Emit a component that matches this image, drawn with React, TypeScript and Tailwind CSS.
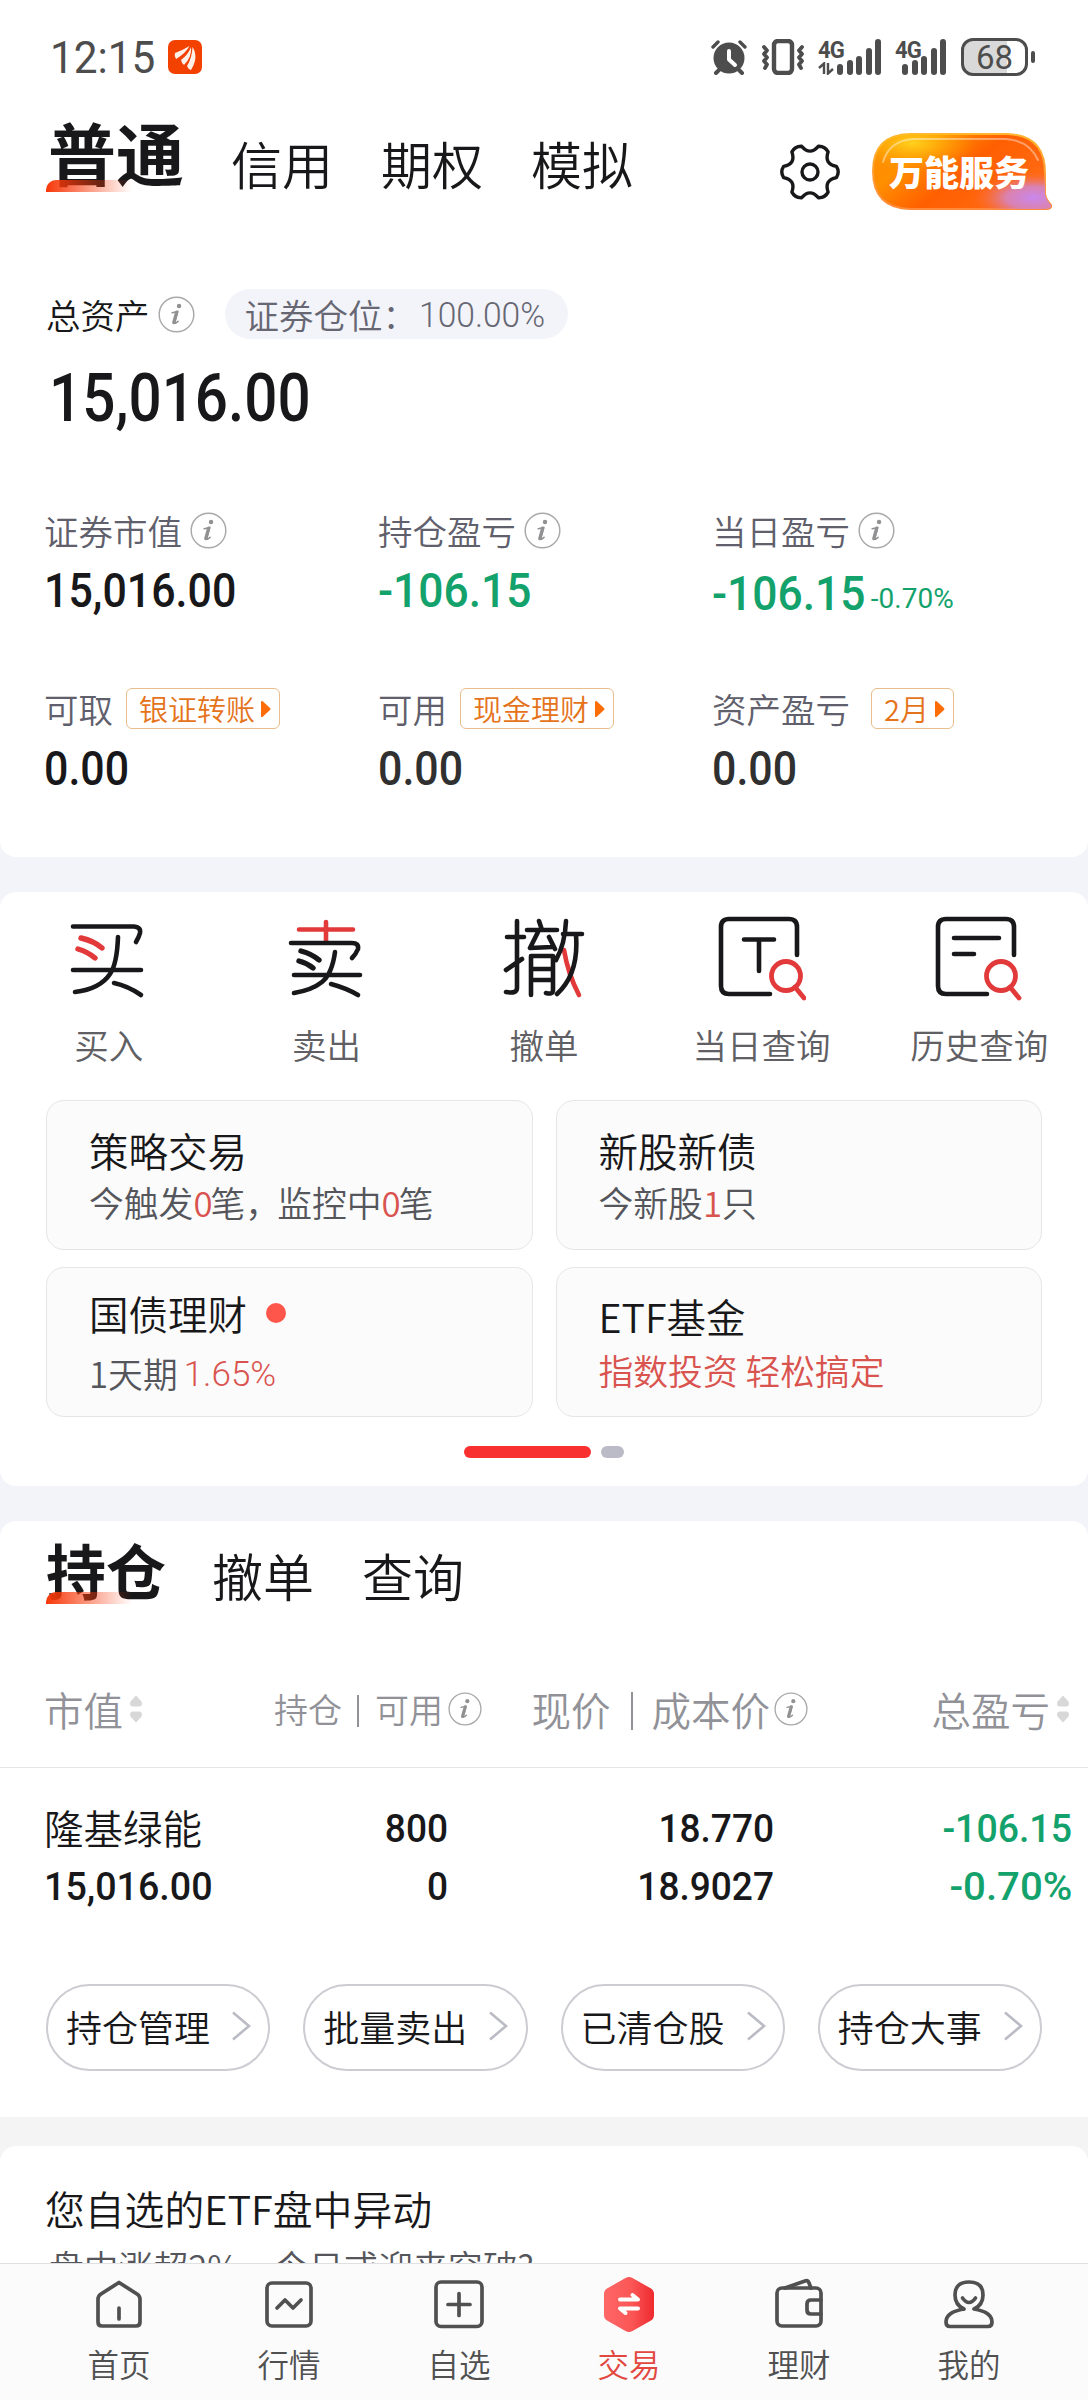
import React from "react";

const CJK = "font-['Noto_Sans_CJK_SC',sans-serif]";
const NUM = "font-['Roboto','Noto_Sans_CJK_SC',sans-serif]";

function Info({ size = 37, className = "" }: { size?: number; className?: string }) {
  return (
    <svg width={size} height={size} viewBox="0 0 38 38" className={`shrink-0 ${className}`}>
      <circle cx="19" cy="19" r="17.8" fill="none" stroke="#a9a9ab" strokeWidth="1.5" />
      <circle cx="21.6" cy="10.2" r="2.3" fill="#919193" />
      <path d="M14.6 17.2 L20.4 15.8 L17.2 27.2 Q17 28.6 18.6 27.6 L20.6 26" fill="none" stroke="#919193" strokeWidth="1.6" strokeLinecap="round" strokeLinejoin="round" />
      <path d="M19.2 16.6 L16.2 27.4" stroke="#919193" strokeWidth="3.4" strokeLinecap="round" />
    </svg>
  );
}

function Sorter() {
  return (
    <svg width="14" height="28" viewBox="0 0 14 28" className="shrink-0">
      <path d="M7 .5 L12.500 6.500 Q14 11 10.500 11.500 H3.500 Q0 11 1.500 6.500 Z" fill="#d8d8d8" />
      <path d="M7 27.500 L12.500 21.500 Q14 17 10.500 16.500 H3.500 Q0 17 1.500 21.500 Z" fill="#d8d8d8" />
    </svg>
  );
}

function StatusBar() {
  return (
    <div className="flex h-[112px] items-center pl-[50px] pr-[53px] pt-[2px] text-[#4d4d4d]">
      <span className={`${NUM} w-[118px] text-[45px] leading-none`}>
        <span className="inline-block origin-left scale-x-[0.94]">12:15</span>
      </span>
      <svg width="34" height="34" viewBox="0 0 34 34">
        <rect width="34" height="34" rx="7" fill="#f34100" />
        <path d="M7 13 Q15 10 21.5 6 Q18 13 8 19 Q6 16 7 13Z M13 20 Q20 15 23 7 Q24 17 16 25 Q13.5 23 13 20Z M19 26 Q24 18 24.5 7 Q31 17 23 30 Q20 29 19 26Z" fill="#fff0e8" />
      </svg>
      <div className="ml-auto flex items-center">
        <svg width="36" height="36" viewBox="0 0 36 36">
          <circle cx="18" cy="19" r="15.5" fill="#4d4d4d" />
          <path d="M2 8 L7 3 M34 8 L29 3" stroke="#4d4d4d" strokeWidth="3.4" strokeLinecap="round" />
          <path d="M8 31 L5 34 M28 31 L31 34" stroke="#4d4d4d" strokeWidth="4" strokeLinecap="round" />
          <path d="M18 12 V20.5 L24 26" fill="none" stroke="#fff" strokeWidth="4" strokeLinecap="round" strokeLinejoin="round" />
        </svg>
        <svg width="44" height="36" viewBox="0 0 44 36" className="ml-[14px]">
          <rect x="13" y="2" width="18" height="32" rx="4" fill="none" stroke="#4d4d4d" strokeWidth="4.400" />
          <path d="M3 8 L6 11.500 L3 15 L6 18.500 L3 22 L6 25.500 L4 29 M41 8 L38 11.500 L41 15 L38 18.500 L41 22 L38 25.500 L40 29" fill="none" stroke="#4d4d4d" strokeWidth="3.800" strokeLinejoin="round" strokeLinecap="round" />
        </svg>
        <Signal arrows />
        <Signal />
        <div className="ml-[15px] flex h-[38px] w-[67px] items-center justify-center overflow-hidden rounded-[12px] border-[3px] border-[#4d4d4d] bg-[linear-gradient(90deg,#d9d9d9_70%,#fff_70%)]">
          <span className={`${NUM} text-[33px] leading-none`}>68</span>
        </div>
        <div className="ml-[3px] h-[12px] w-[4px] rounded-full bg-[#4d4d4d]" />
      </div>
    </div>
  );
}

const signalBars = [11, 15, 19, 27, 36];

function Signal({ arrows = false }: { arrows?: boolean }) {
  return (
    <div className={arrows ? "relative ml-[13px] h-[36px] w-[63px]" : "relative ml-[14px] h-[36px] w-[51px]"}>
      <span className={`${NUM} absolute left-0 top-[-1px] inline-block origin-left scale-x-[0.92] text-[24px] font-bold leading-none tracking-[-1px]`}>4G</span>
      {arrows && (
        <svg width="16" height="13" viewBox="0 0 16 13" className="absolute bottom-0 left-0">
          <path d="M1 6 L6 1.500 V12 M10 1 V11.500 L15 7" fill="none" stroke="#4d4d4d" strokeWidth="2.400" />
        </svg>
      )}
      <div className="absolute bottom-0 right-0 flex items-end gap-[3.500px]">
        {signalBars.map((h) => (
          <i key={h} className="w-[6px] rounded-full bg-[#4d4d4d]" style={{ height: h }} />
        ))}
      </div>
    </div>
  );
}

function Gear() {
  const p = (deg: number, r: number) =>
    `${(30 + r * Math.cos((deg * Math.PI) / 180)).toFixed(1)} ${(30 + r * Math.sin((deg * Math.PI) / 180)).toFixed(1)}`;
  let d = `M${p(-12, 27)}`;
  for (let k = 0; k < 6; k++) {
    const a = k * 60;
    d += ` Q${p(a, 30)} ${p(a + 12, 27)} Q${p(a + 30, 16)} ${p(a + 48, 27)}`;
  }
  return (
    <svg width="60" height="60" viewBox="0 0 60 60" className="shrink-0">
      <path d={`${d} Z`} fill="none" stroke="#18181a" strokeWidth="3.400" strokeLinejoin="round" />
      <circle cx="30" cy="30" r="8" fill="none" stroke="#18181a" strokeWidth="3.400" />
    </svg>
  );
}

function ServiceBadge() {
  return (
    <div className="relative flex h-[78px] w-[182px] shrink-0 items-center">
      <svg width="182" height="78" viewBox="0 0 182 78" className="absolute inset-0">
        <defs>
          <linearGradient id="bubble" x1="0" y1="0" x2="1" y2="0.5">
            <stop offset="0" stopColor="#ff8a00" />
            <stop offset="0.3" stopColor="#ff9000" />
            <stop offset="0.6" stopColor="#ff5f00" />
            <stop offset="1" stopColor="#ff6a14" />
          </linearGradient>
          <radialGradient id="sun" cx="0.22" cy="0.12" r="0.36">
            <stop offset="0" stopColor="#ffd21e" />
            <stop offset="1" stopColor="#ffa800" stopOpacity="0" />
          </radialGradient>
          <radialGradient id="violet" cx="0.9" cy="0.85" r="0.34">
            <stop offset="0" stopColor="#c988ee" />
            <stop offset="0.45" stopColor="#d684c0" stopOpacity="0.9" />
            <stop offset="1" stopColor="#ff6a3c" stopOpacity="0" />
          </radialGradient>
          <linearGradient id="rim" x1="0" y1="0" x2="0" y2="1">
            <stop offset="0" stopColor="#ffb52e" />
            <stop offset="1" stopColor="#ff8a3a" />
          </linearGradient>
        </defs>
        {["url(#bubble)", "url(#sun)", "url(#violet)"].map((f) => (
          <path key={f} d="M39 2 H136 Q174 3 174 41 V62 Q175 68 180 73 Q181 77 175 77 H39 Q2 76 2 39 Q2 3 39 2Z" fill={f} stroke={f === "url(#bubble)" ? "url(#rim)" : "none"} strokeWidth="2" />
        ))}
        <path d="M12 30 Q18 9 42 7 H134 Q158 8 167 28" fill="none" stroke="#fff" strokeOpacity="0.4" strokeWidth="2" strokeLinecap="round" />
      </svg>
      <span className={`${CJK} relative ml-[18px] mt-[-2px] whitespace-nowrap text-[35px] font-black leading-none text-white`}>万能服务</span>
    </div>
  );
}

function Swoosh({ className }: { className: string }) {
  return <i className={`absolute h-[12px] w-[86px] rounded-tl-[10px] bg-linear-to-r from-[#f73708] via-[#f73708]/50 to-[#f73708]/0 ${className}`} />;
}

function TopTabs() {
  return (
    <div className="flex h-[177px] items-start pl-[48px] text-[#18181a]">
      <span className={`${CJK} relative mt-[6px] w-[136px] whitespace-nowrap text-[68px] font-bold leading-none`}>
        普通
        <Swoosh className="left-[-2px] top-[62px]" />
      </span>
      <div className={`${CJK} ml-[47px] mt-[26px] flex gap-[48px] whitespace-nowrap text-[51px] font-[350] leading-none`}>
        <span>信用</span>
        <span>期权</span>
        <span>模拟</span>
      </div>
      <div className="ml-auto mr-[35px] flex items-start">
        <div className="mr-[31px] mt-[30px]">
          <Gear />
        </div>
        <div className="mt-[20px]">
          <ServiceBadge />
        </div>
      </div>
    </div>
  );
}

function Chip({ children }: { children: React.ReactNode }) {
  return (
    <span className={`${CJK} flex h-[41px] items-center gap-[5px] rounded-[6px] border border-[#e9bd8c] pb-[1px] pl-[12px] pr-[8px] text-[29px] font-[350] leading-none text-[#e5731b]`}>
      {children}
      <svg width="11" height="18" viewBox="0 0 11 18" className="mt-[1px]">
        <path d="M1 1.500 Q2 .5 3 1.500 L10 8 Q11 9 10 10 L3 16.500 Q2 17.500 1 16.500Z" fill="#fc6d05" />
      </svg>
    </span>
  );
}

type MetricProps = {
  label: string;
  value: string;
  color?: string;
  scale?: string;
  info?: boolean;
  chip?: string;
  chipGap?: string;
  pct?: string;
};

function Metric({ label, value, color = "text-[#18181a]", scale = "scale-x-[0.885]", info, chip, chipGap = "ml-[13px]", pct }: MetricProps) {
  return (
    <div>
      <div className="flex h-[41px] items-center">
        <span className={`${CJK} whitespace-nowrap text-[34.500px] font-[350] leading-none text-[#5f606c]`}>{label}</span>
        {info && <Info className="ml-[8px]" />}
        {chip && (
          <div className={chipGap}>
            <Chip>{chip}</Chip>
          </div>
        )}
      </div>
      <div className={`flex h-[80px] items-center ${pct ? "pt-[6px]" : "pt-[1px]"} ${color}`}>
        <span className={`${NUM} inline-block origin-left text-[48.500px] font-medium leading-none ${scale}`}>{value}</span>
        {pct && <span className={`${NUM} ml-[-9px] mt-[10px] inline-block origin-left text-[28px] leading-none`}>{pct}</span>}
      </div>
    </div>
  );
}

function Overview() {
  return (
    <section className="h-[857px] rounded-b-[16px] bg-white">
      <StatusBar />
      <TopTabs />
      <div className="flex h-[50px] items-center pl-[46px]">
        <span className={`${CJK} text-[34.500px] font-[350] leading-none text-[#18181a]`}>总资产</span>
        <Info className="ml-[8px]" />
        <div className="ml-[30px] flex h-[50px] w-[343px] items-center rounded-full bg-[#f3f4f9] pl-[20px] text-[#666773]">
          <span className={`${CJK} whitespace-nowrap text-[34.500px] font-[350] leading-none`}>证券仓位：</span>
          <span className={`${NUM} ml-[2px] mt-[3px] inline-block origin-left scale-x-[0.96] text-[35px] font-light leading-none`}>100.00%</span>
        </div>
      </div>
      <div className="flex h-[120px] items-center pl-[49px]">
        <span className={`${NUM} inline-block origin-left scale-x-[0.885] text-[66px] font-medium leading-none text-[#18181a]`}>15,016.00</span>
      </div>
      <div className="mt-[51px] grid grid-cols-[334px_334px_1fr] gap-y-[57px] pl-[44px]">
        <Metric label="证券市值" value="15,016.00" info />
        <Metric label="持仓盈亏" value="-106.15" info color="text-[#14a26c]" scale="scale-x-[0.915]" />
        <Metric label="当日盈亏" value="-106.15" info pct="-0.70%" color="text-[#14a26c]" scale="scale-x-[0.915]" />
        <Metric label="可取" value="0.00" chip="银证转账" />
        <Metric label="可用" value="0.00" chip="现金理财" color="text-[#303030]" />
        <Metric label="资产盈亏" value="0.00" chip="2月" chipGap="ml-[21px]" color="text-[#303030]" />
      </div>
    </section>
  );
}

const ink = { fill: "none", stroke: "#18181a", strokeWidth: 4.6, strokeLinecap: "round", strokeLinejoin: "round" } as const;
const red = { ...ink, stroke: "#e23a3a" } as const;

function BuyIcon() {
  return (
    <svg width="88" height="88" viewBox="0 0 88 88">
      <path {...ink} d="M8 12.500 H69 Q76 13 75 19 Q74 23 71 28 M53 23 Q52 50 45 60 Q35 75 10 78 M8 56 H76 M49 69 Q63 72 76 81" />
      <path {...red} d="M16 24 Q29 27 37 34 M13 35 Q23 38 30 44" strokeWidth="5.400" />
    </svg>
  );
}

function SellIcon() {
  return (
    <svg width="88" height="88" viewBox="0 0 88 88">
      <path {...red} d="M44 8 V28 M17 15.500 H71" />
      <path {...ink} d="M9 29 H70 Q77 29 76 35 Q74 40 70 44 M53 38 Q50 60 40 68 Q30 76 12 79 M12 61 H78 M49 70 Q64 74 76 81" />
      <path {...ink} d="M19 37 Q30 40 37 46 M17 47 Q25 49 31 54" strokeWidth="5.400" />
    </svg>
  );
}

function CancelIcon() {
  return (
    <svg width="88" height="88" viewBox="0 0 88 88">
      <path {...red} d="M64 36 Q68 60 79 81" />
      <path {...ink} d="M17 7 V74 Q17 80 6 78 M7 23 H24 M6 56 L22 45 M39 7 L42 16 M27 16 H57 M38 18 L30 34 L52 33 M49 23 L55 35 M31 81 V42 H53 V76 Q53 81 46 79 M31 55 H53 M31 66 H53 M66 7 Q65 30 56 46 M63 20 H82 M76 21 Q79 60 57 80" />
    </svg>
  );
}

function QueryIcon({ history = false }: { history?: boolean }) {
  return (
    <svg width="88" height="88" viewBox="0 0 88 88">
      <path {...ink} d="M79 41 V13 Q79 5 71 5 H11 Q3 5 3 13 V72 Q3 80 11 80 H52" />
      {history ? <path {...ink} d="M19 24 H64 M19 40 H39" /> : <path {...ink} d="M26 25.500 H56 M41 26 V57" />}
      <circle {...red} cx={history ? 66 : 68} cy="62" r="14.500" strokeWidth="4.800" />
      <path {...red} d={history ? "M75 73 L84 84" : "M77 73 L86 84"} strokeWidth="4.800" />
    </svg>
  );
}

const actions = [
  { label: "买入", icon: <BuyIcon /> },
  { label: "卖出", icon: <SellIcon /> },
  { label: "撤单", icon: <CancelIcon /> },
  { label: "当日查询", icon: <QueryIcon /> },
  { label: "历史查询", icon: <QueryIcon history /> },
];

function Card({ title, dot, pad, gap, children }: { title: string; dot?: boolean; pad: string; gap: string; children: React.ReactNode }) {
  return (
    <div className={`${CJK} h-[150px] rounded-[18px] border-[1.500px] border-[#e6e6ea] bg-[#fbfbfb] pl-[42px] font-[350] leading-none ${pad}`}>
      <div className="flex h-[52px] items-center text-[39.500px] text-[#18181a]">
        <span className="whitespace-nowrap">{title}</span>
        {dot && <i className="ml-[19px] size-[20px] rounded-full bg-[#ff564c]" />}
      </div>
      <div className={`flex h-[52px] items-center whitespace-nowrap text-[34.800px] text-[#55565c] ${gap}`}>{children}</div>
    </div>
  );
}

function Red({ children, tight }: { children: React.ReactNode; tight?: boolean }) {
  return <span className={`text-[#d9534f] ${tight ? "tracking-[-2px]" : ""}`}>{children}</span>;
}

function Trading() {
  return (
    <section className="mt-[35px] h-[594px] rounded-[16px] bg-white pt-[22px]">
      <div className="grid grid-cols-5">
        {actions.map((a) => (
          <div key={a.label} className="flex flex-col items-center">
            {a.icon}
            <span className={`${CJK} mt-[22px] flex h-[40px] items-center text-[34.500px] font-[350] leading-none text-[#606064]`}>{a.label}</span>
          </div>
        ))}
      </div>
      <div className="mt-[36px] grid grid-cols-2 gap-x-[23px] gap-y-[17px] px-[46px]">
        <Card title="策略交易" pad="pt-[23px]" gap="">
          今触发<Red tight>0</Red>笔<span className="tracking-[-3px]">，</span>监控中<Red tight>0</Red>笔
        </Card>
        <Card title="新股新债" pad="pt-[23px]" gap="">
          今新股<Red>1</Red>只
        </Card>
        <Card title="国债理财" dot pad="pt-[19px]" gap="mt-[8px]">
          1天期
          <span className={`${NUM} ml-[6px] mt-[2px] inline-block text-[35px] font-light`}>
            <Red>1.65%</Red>
          </span>
        </Card>
        <Card title="ETF基金" pad="pt-[22px]" gap="mt-[2px]">
          <Red>指数投资 轻松搞定</Red>
        </Card>
      </div>
      <div className="mt-[29px] flex justify-center gap-[10px]">
        <i className="h-[12px] w-[127px] rounded-full bg-[#f83030]" />
        <i className="h-[12px] w-[23px] rounded-full bg-[#babbc6]" />
      </div>
    </section>
  );
}

function Bar({ className }: { className: string }) {
  return <i className={`w-[2px] bg-[#919197] ${className}`} />;
}

function Row({ cells }: { cells: React.ReactNode[] }) {
  return (
    <div className={`${NUM} grid h-[58px] grid-cols-[260px_188px_326px_298px] items-center text-[39px] font-medium leading-none text-[#18181a]`}>
      <span className="pl-[44px]">{cells[0]}</span>
      <span className="origin-right scale-x-[0.95] text-right">{cells[1]}</span>
      <span className="origin-right scale-x-[0.95] text-right">{cells[2]}</span>
      <span className="text-right text-[#14a26c]">{cells[3]}</span>
    </div>
  );
}

function Holdings() {
  return (
    <section className="mt-[35px] h-[596px] rounded-t-[16px] bg-white">
      <div className={`${CJK} flex h-[149px] items-start whitespace-nowrap pl-[46px] leading-none text-[#18181a]`}>
        <span className="relative mt-[18px] w-[120px] text-[60px] font-bold">
          持仓
          <Swoosh className="left-0 top-[53px]" />
        </span>
        <div className="ml-[46px] mt-[29px] flex gap-[48px] text-[51px] font-[350]">
          <span>撤单</span>
          <span>查询</span>
        </div>
      </div>
      <div className={`${CJK} grid h-[98px] grid-cols-[250px_232px_326px_262px] items-center whitespace-nowrap border-b-[1.500px] border-[#e4e4e6] pb-[19px] text-[39.500px] font-[350] leading-none text-[#919198]`}>
        <div className="flex items-center gap-[6px] pl-[44px]">
          市值
          <Sorter />
        </div>
        <div className="flex items-center justify-end text-[34px]">
          持仓
          <Bar className="ml-[15px] mr-[16px] mt-[3px] h-[32px]" />
          可用
          <Info size={34} className="ml-[5px]" />
        </div>
        <div className="flex items-center justify-end">
          现价
          <Bar className="ml-[20px] mr-[19px] mt-[3px] h-[38px]" />
          成本价
          <Info size={34} className="ml-[4px]" />
        </div>
        <div className="flex items-center justify-end gap-[6px]">
          总盈亏
          <Sorter />
        </div>
      </div>
      <div className="mt-[32px]">
        <Row
          cells={[
            <span className={`${CJK} text-[39.500px] font-[350]`}>隆基绿能</span>,
            "800",
            "18.770",
            <span className="inline-block origin-right scale-x-[0.96]">-106.15</span>,
          ]}
        />
        <Row cells={[<span className="inline-block origin-left scale-x-[0.965]">15,016.00</span>, "0", "18.9027", <span className="inline-block origin-right scale-x-[1.03]">-0.70%</span>]} />
      </div>
      <div className="mt-[68px] grid grid-cols-4 gap-x-[33px] px-[46px]">
        {["持仓管理", "批量卖出", "已清仓股", "持仓大事"].map((t) => (
          <div key={t} className={`${CJK} flex h-[87px] items-center whitespace-nowrap rounded-full border-2 border-[#cccdd2] pb-[3px] pl-[18px] text-[36px] font-[350] leading-none text-[#18181a]`}>
            {t}
            <svg width="20" height="30" viewBox="0 0 20 30" className="ml-[21px]">
              <path d="M2 1.500 L18 15 L2 28.500" fill="none" stroke="#babbc4" strokeWidth="2.600" />
            </svg>
          </div>
        ))}
      </div>
    </section>
  );
}

function News() {
  return (
    <div className="bg-[#f4f4f4] pt-[29px]">
      <section className={`${CJK} h-[117px] overflow-hidden rounded-t-[16px] bg-white pl-[45px] pt-[42px] font-[350]`}>
        <h2 className="whitespace-nowrap text-[39.800px] leading-[40px] text-[#18181a]">您自选的ETF盘中异动</h2>
        <p className="mt-[21px] whitespace-nowrap pl-[4px] text-[34.800px] leading-none text-[#55565c]">盘中涨超2%，今日或迎来突破?</p>
      </section>
    </div>
  );
}

const line = { fill: "none", stroke: "#505050", strokeWidth: 3.7, strokeLinecap: "round", strokeLinejoin: "round" } as const;

const tabs = [
  { label: "首页", icon: <path {...line} d="M28 6.500 L46 18 Q49 20 49 23 V46 Q49 50 45 50 H11 Q7 50 7 46 V23 Q7 20 10 18 Z M28 32 V43" /> },
  {
    label: "行情",
    icon: (
      <>
        <rect {...line} x="6" y="7" width="44" height="43" rx="5" />
        <path {...line} d="M16 32 L24 24 L32 32 L40 24" />
      </>
    ),
  },
  {
    label: "自选",
    icon: (
      <>
        <rect {...line} x="5" y="6" width="46" height="44.500" rx="5" />
        <path {...line} d="M28 17.500 V39.500 M17 28.500 H39" />
      </>
    ),
  },
  {
    label: "交易",
    active: true,
    icon: (
      <>
        <defs>
          <linearGradient id="hex" x1="0" y1="0" x2="1" y2="0">
            <stop offset="0" stopColor="#ff6767" />
            <stop offset="0.550" stopColor="#fb5656" />
            <stop offset="1" stopColor="#ee2a2e" />
          </linearGradient>
        </defs>
        <path d="M24.500 2 Q28 0 31.500 2 L50 12.500 Q53 14.500 53 18 V39 Q53 42.500 50 44.500 L31.500 55 Q28 57 24.500 55 L6 44.500 Q3 42.500 3 39 V18 Q3 14.500 6 12.500 Z" fill="url(#hex)" />
        <path d="M19 23.500 H37 L31.500 19 M37 32.500 H19 L24.500 37" fill="none" stroke="#fff" strokeWidth="4" strokeLinecap="round" strokeLinejoin="round" />
      </>
    ),
  },
  {
    label: "理财",
    icon: (
      <>
        <rect {...line} x="6" y="12" width="44" height="38" rx="5" />
        <path {...line} d="M14 12 L34 5 Q37 4 38 7 L40 12 M50 24 H40 Q36 24 36 28 V34 Q36 38 40 38 H50" />
      </>
    ),
  },
  {
    label: "我的",
    icon: (
      <>
        <path {...line} d="M23 33 Q14 29 14 19 Q14 6 28 6 Q42 6 42 19 Q42 29 33 33 Q51 36 51 46 Q51 50.500 47 50.500 H9 Q5 50.500 5 46 Q5 36 23 33" />
        <path {...line} d="M21.500 22 Q28 31 34.500 22" />
      </>
    ),
  },
];

function NavBar() {
  return (
    <nav className="grid h-[137px] grid-cols-6 border-t border-[#e0e0e2] bg-[#fbfbfc] px-[34px] pt-[12px]">
      {tabs.map((t) => (
        <div key={t.label} className="flex flex-col items-center">
          <svg width="56" height="57" viewBox="0 0 56 57">
            {t.icon}
          </svg>
          <span className={`${CJK} mt-[11px] flex h-[40px] items-center text-[31.500px] font-[350] leading-none ${t.active ? "text-[#e2483f]" : "text-[#505050]"}`}>{t.label}</span>
        </div>
      ))}
    </nav>
  );
}

export default function App() {
  return (
    <main className="h-[2400px] w-[1088px] overflow-hidden bg-[#f3f4f9]">
      <Overview />
      <Trading />
      <Holdings />
      <News />
      <NavBar />
    </main>
  );
}
